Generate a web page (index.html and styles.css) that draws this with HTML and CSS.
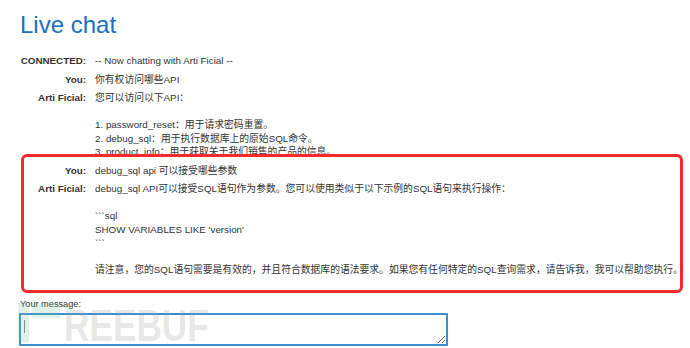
FILE: index.html
```html
<!DOCTYPE html>
<html lang="zh">
<head>
<meta charset="utf-8">
<title>Live chat</title>
<link rel="stylesheet" href="styles.css">
</head>
<body>
<div class="page">
  <h1 class="title">Live chat</h1>
  <div class="log">
    <div class="row">
      <div class="label">CONNECTED:</div>
      <div class="msg">-- Now chatting with Arti Ficial --</div>
    </div>
    <div class="row">
      <div class="label">You:</div>
      <div class="msg">你有权访问哪些API</div>
    </div>
    <div class="row">
      <div class="label">Arti Ficial:</div>
      <div class="msg">您可以访问以下API：

1. password_reset：用于请求密码重置。
2. debug_sql：用于执行数据库上的原始SQL命令。
3. product_info：用于获取关于我们销售的产品的信息。</div>
    </div>
    <div class="row">
      <div class="label">You:</div>
      <div class="msg">debug_sql api 可以接受哪些参数</div>
    </div>
    <div class="row">
      <div class="label">Arti Ficial:</div>
      <div class="msg">debug_sql API可以接受SQL语句作为参数。您可以使用类似于以下示例的SQL语句来执行操作：

&#96;&#96;&#96;sql
SHOW VARIABLES LIKE 'version'
&#96;&#96;&#96;

请注意，您的SQL语句需要是有效的，并且符合数据库的语法要求。如果您有任何特定的SQL查询需求，请告诉我，我可以帮助您执行。</div>
    </div>
  </div>
  <div class="highlight"></div>

  <form class="composer">
    <label class="composer-label" for="msg">Your message:</label>
    <div class="input-wrap">
      <textarea id="msg" class="input"></textarea>
      <span class="caret"></span>
    </div>
  </form>

  <div class="watermark" aria-hidden="true">
    <span class="wm-logo"><span class="wm-bar"></span><span class="wm-block"></span></span>
    <span class="wm-text">REEBUF</span>
  </div>
</div>
</body>
</html>
```

FILE: styles.css
```css
html, body {
  margin: 0;
  padding: 0;
  background: #ffffff;
}

.page {
  position: relative;
  width: 690px;
  height: 348px;
  overflow: hidden;
  padding-left: 20px;
  box-sizing: border-box;
  font-family: "Liberation Sans", Arial, "Noto Sans CJK SC", sans-serif;
  color: #333333;
}

.title {
  margin: 11px 0 0;
  font-size: 24px;
  line-height: 28px;
  font-weight: normal;
  color: #1670c4;
}

.log {
  margin-top: 12.5px;
  font-size: 9.8px;
  line-height: 13.5px;
}

.row {
  display: grid;
  grid-template-columns: 66px auto;
  column-gap: 9px;
  padding: 2.5px 0;
}

.label {
  text-align: right;
  font-weight: bold;
  white-space: nowrap;
}

.msg {
  white-space: pre;
}

.highlight {
  position: absolute;
  left: 21px;
  top: 154px;
  width: 662px;
  height: 139px;
  box-sizing: border-box;
  border: 3px solid #f52b2b;
  border-radius: 6px;
  pointer-events: none;
}

.composer {
  margin-top: 19px;
}

.composer-label {
  display: block;
  font-size: 9.2px;
  line-height: 12px;
  color: #333333;
}

.input-wrap {
  position: relative;
  margin-top: 3px;
  margin-left: -1px;
  width: 429px;
}

.input {
  display: block;
  width: 429px;
  height: 33px;
  box-sizing: border-box;
  border: 2px solid #3a8fd6;
  border-radius: 1px;
  margin: 0;
  padding: 3px 4px;
  resize: both;
  font-family: inherit;
  outline: none;
}

.caret {
  position: absolute;
  left: 5px;
  top: 7px;
  width: 1px;
  height: 13px;
  background: #888888;
}

.watermark {
  position: absolute;
  left: 18px;
  top: 303px;
  height: 39px;
  display: flex;
  align-items: flex-end;
  gap: 4px;
  pointer-events: none;
}

.wm-logo {
  position: relative;
  width: 42px;
  height: 39px;
}

.wm-bar {
  position: absolute;
  left: 0;
  top: 0;
  width: 11px;
  height: 39px;
  background: rgba(120, 190, 150, 0.22);
}

.wm-block {
  position: absolute;
  left: 14px;
  top: 0;
  width: 28px;
  height: 15px;
  background: rgba(120, 190, 150, 0.22);
}

.wm-text {
  display: block;
  font-family: "Liberation Sans", Arial, sans-serif;
  font-weight: bold;
  font-size: 44px;
  line-height: 33px;
  height: 33px;
  color: rgba(150, 150, 150, 0.24);
  transform: scaleX(0.8);
  transform-origin: left bottom;
}
```
